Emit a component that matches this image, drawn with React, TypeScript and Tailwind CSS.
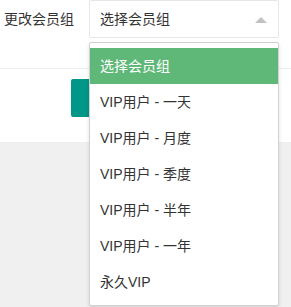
export default function App() {
  const options = [
    "选择会员组",
    "VIP用户 - 一天",
    "VIP用户 - 月度",
    "VIP用户 - 季度",
    "VIP用户 - 半年",
    "VIP用户 - 一年",
    "永久VIP",
  ];

  return (
    <div
      className="min-h-[307px] w-[291px] bg-[#f0f0f0] text-[14px] text-[#333]"
      style={{ fontFamily: '"Liberation Sans", "Noto Sans CJK SC", sans-serif' }}
    >
      <div className="bg-white">
        <div className="flex h-[69px] items-start border-b border-[#eeeeee]">
          <label className="w-[89px] pl-[4px] leading-[38px]">更改会员组</label>
          <div className="relative">
            <div className="relative h-[38px] w-[190px] border border-[#e6e6e6] bg-white pl-[10px] leading-[36px] rounded-[2px]">
              选择会员组
              <span className="absolute right-[11px] top-[16px] h-0 w-0 border-x-[6px] border-b-[6px] border-x-transparent border-b-[#c2c2c2]" />
            </div>
            <dl className="absolute left-0 top-[42px] z-10 w-[190px] rounded-[2px] border border-[#d2d2d2] bg-white py-[5px] shadow-[0_2px_4px_rgba(0,0,0,0.12)]">
              {options.map((opt, i) => (
                <dd
                  key={i}
                  className={
                    i === 0
                      ? "h-[36px] bg-[#5fb878] px-[10px] leading-[36px] text-white"
                      : "h-[36px] px-[10px] leading-[36px] text-[#333]"
                  }
                >
                  {opt}
                </dd>
              ))}
            </dl>
          </div>
        </div>
        <div className="pl-[71px] pt-[10px] pb-[25px]">
          <button className="block h-[38px] w-[92px] rounded-[2px] bg-[#009688]" aria-label="提交" />
        </div>
      </div>
    </div>
  );
}
